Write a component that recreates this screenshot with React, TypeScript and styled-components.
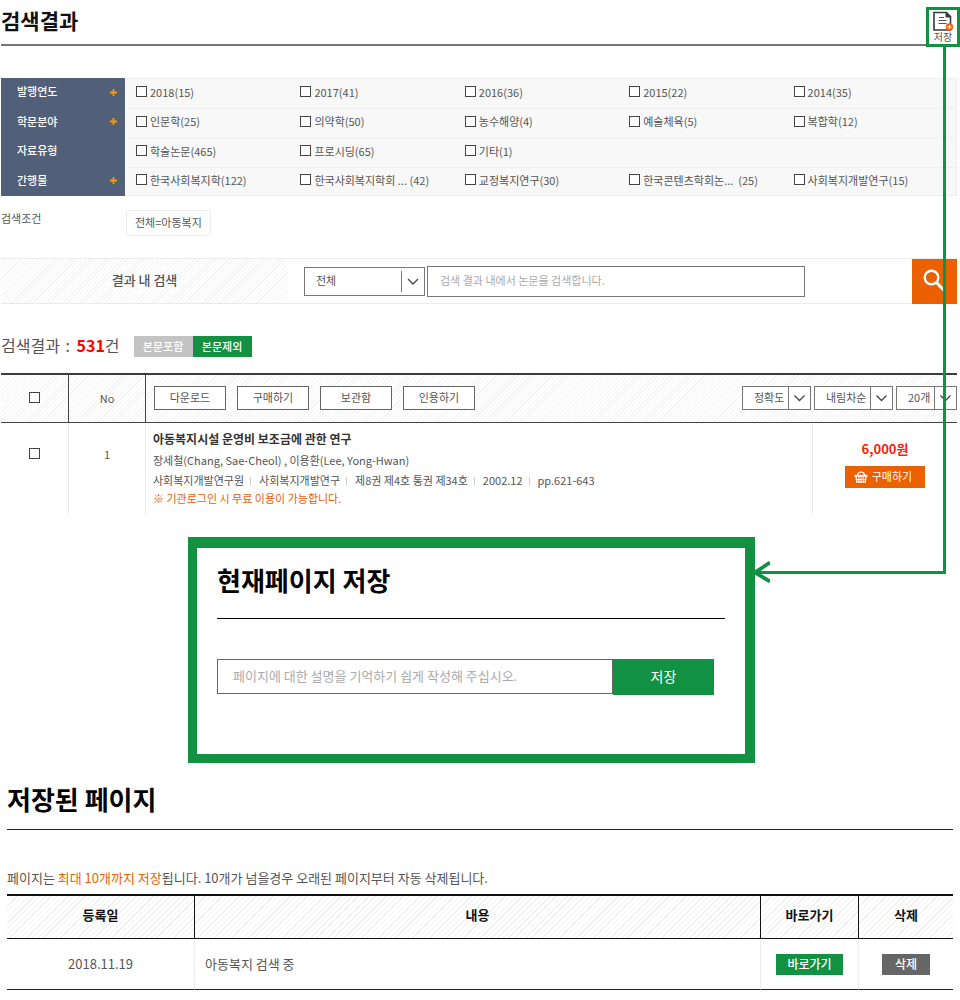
import React from "react";
import styled, { createGlobalStyle } from "styled-components";

const GREEN = "#129143";
const ORANGE = "#eb6100";

const GlobalStyle = createGlobalStyle`
  *, *::before, *::after { box-sizing: border-box; }
  body {
    margin: 0;
    background: #fff;
    color: #555;
    font: 400 11px/16px "Noto Sans CJK KR", "Noto Sans", sans-serif;
  }
  button, input, select { font: inherit; color: inherit; margin: 0; border-radius: 0; }
  button { cursor: pointer; padding: 0; border: 0; }
  h1, h2, p { margin: 0; }
  fieldset { margin: 0; padding: 0; border: 0; min-width: 0; }
`;

/* ---------- search results ---------- */

const SearchScreen = styled.main`
  position: relative;
`;

const Header = styled.header`
  margin: 0 3px 0 1px;
  height: 46px;
  border-bottom: 2px solid #777;
`;

const PageTitle = styled.h1`
  font-size: 21px;
  line-height: 40px;
  font-weight: 700;
  color: #111;
`;

const SavePageButton = styled.button`
  position: absolute;
  top: 7px;
  right: 0;
  width: 34px;
  height: 40px;
  border: 3px solid ${GREEN};
  background: #fff;
  display: flex;
  flex-direction: column;
  align-items: center;
  padding-top: 1px;
  font-size: 10px;
  line-height: 10px;
`;

const Content = styled.div`
  padding: 32px 3px 0 1px;
`;

const Filters = styled.div`
  display: grid;
  grid-auto-rows: 1fr;
  min-height: 118px;
`;

const FilterRow = styled.fieldset`
  display: grid;
  grid-template-columns: 124px 1fr;
`;

const FilterName = styled.div`
  display: flex;
  align-items: center;
  justify-content: space-between;
  padding: 0 8px 3px 16px;
  background: #515f79;
  color: #fff;
  font-weight: 500;
`;

const MoreButton = styled.button`
  background: none;
  width: 7px;
  height: 7px;
  display: flex;
  margin-top: 2px;
`;

const FilterOptions = styled.div`
  display: grid;
  grid-template-columns: repeat(5, 1fr);
  column-gap: 2px;
  align-items: center;
  margin-left: 1px;
  padding: 0 0 3px 10px;
  background: #f8f8f8;
  border: 1px solid #efefef;
  border-width: 1px 1px 0 0;
  ${FilterRow}:last-child & { border-bottom-width: 1px; }
`;

const Option = styled.label`
  display: flex;
  align-items: center;
  gap: 3px;
  white-space: pre;
`;

const CheckBox = styled.input.attrs({ type: "checkbox" })`
  appearance: none;
  flex: none;
  width: 11px;
  height: 11px;
  border: 1px solid #444;
  background: #fff;
  &:checked { background: #444; }
`;

const Condition = styled.div`
  display: grid;
  grid-template-columns: 125px auto;
  justify-content: start;
  align-items: start;
  margin-top: 14px;
`;

const ConditionTag = styled.span`
  border: 1px solid #ececec;
  border-radius: 3px;
  padding: 2px 8px 4px;
  line-height: 18px;
`;

const SearchBand = styled.form`
  display: flex;
  align-items: center;
  height: 46px;
  margin-top: 22px;
  border: solid #ebebeb;
  border-width: 1px 0;
`;

const BandLabel = styled.label`
  align-self: stretch;
  flex: 0 0 287px;
  display: flex;
  align-items: center;
  justify-content: center;
  margin-right: 16px;
  padding-bottom: 2px;
  font-size: 13px;
  font-weight: 500;
  background: repeating-linear-gradient(135deg, #fff 0 2px, #f4f4f4 2px 3px);
`;

const SelectBox = styled.span<{ $width: number; $height: number; $arrow: number }>`
  position: relative;
  display: inline-flex;
  flex: none;
  width: ${(p) => p.$width}px;
  height: ${(p) => p.$height}px;
  svg {
    position: absolute;
    right: 1px;
    top: 1px;
    width: ${(p) => p.$arrow}px;
    height: calc(100% - 2px);
    pointer-events: none;
  }
`;

const Select = styled.select`
  appearance: none;
  width: 100%;
  height: 100%;
  border: 1px solid #777;
  background: #fff;
  padding: 0 0 2px 11px;
`;

const BandInput = styled.input`
  flex: 0 1 378px;
  min-width: 0;
  height: 31px;
  margin-left: 2px;
  padding: 0 12px 2px;
  border: 1px solid #777;
  &::placeholder { color: #aaa; }
`;

const SearchButton = styled.button`
  flex: none;
  width: 45px;
  height: 45px;
  margin-left: auto;
  background: ${ORANGE};
`;

const ResultHead = styled.div`
  display: flex;
  align-items: center;
  gap: 14px;
  margin-top: 29px;
`;

const ResultCount = styled.h2`
  font-size: 16px;
  line-height: 24px;
  font-weight: 400;
  strong { color: #f00; }
`;

const Colon = styled.span`
  margin: 0 3px 0 2px;
`;

const Toggle = styled.div`
  display: flex;
  margin-top: 3px;
`;

const ToggleButton = styled.button<{ $active?: boolean }>`
  width: 59px;
  height: 21px;
  padding-bottom: 2px;
  color: #fff;
  font-weight: 500;
  background: ${(p) => (p.$active ? GREEN : "#c3c3c3")};
`;

const ResultTable = styled.table`
  width: 100%;
  margin-top: 16px;
  table-layout: fixed;
  border-collapse: separate;
  border-spacing: 0;
  border-top: 2px solid #3c3c3c;
`;

const ResultTh = styled.th`
  height: 48px;
  padding: 0 0 1px;
  font-weight: 400;
  border-bottom: 1px solid #444;
  background: repeating-linear-gradient(135deg, #fff 0 2px, #f4f4f4 2px 3px);
  & + & { border-left: 1px solid #444; }
`;

const ResultTd = styled.td`
  height: 92px;
  padding: 0;
  vertical-align: top;
  text-align: center;
  & + & { border-left: 1px solid #ececec; }
`;

const CellTop = styled.div`
  display: flex;
  align-items: center;
  justify-content: center;
  height: 61px;
`;

const Toolbar = styled.div`
  display: flex;
  align-items: center;
  gap: 11px;
  padding-left: 8px;
`;

const ToolButton = styled.button`
  width: 72px;
  height: 24px;
  padding-bottom: 2px;
  border: 1px solid #666;
  background: #fff;
`;

const SortGroup = styled.div`
  display: flex;
  gap: 3px;
  margin-left: auto;
`;

const Article = styled.div`
  padding: 6px 0 0 7px;
  text-align: left;
`;

const ArticleTitle = styled.a`
  display: block;
  font-size: 12px;
  line-height: 20px;
  font-weight: 700;
  color: #333;
  text-decoration: none;
`;

const Authors = styled.p`
  line-height: 22px;
`;

const Meta = styled.p`
  display: flex;
  line-height: 18px;
`;

const MetaPart = styled.span`
  & + &::before {
    content: "";
    display: inline-block;
    height: 8px;
    margin: 0 8px 0 6px;
    border-left: 1px solid #ccc;
  }
`;

const Notice = styled.p`
  line-height: 18px;
  color: ${ORANGE};
`;

const Price = styled.p`
  padding-top: 17px;
  font-size: 13px;
  line-height: 18px;
  font-weight: 700;
  color: #fa1e0e;
`;

const BuyButton = styled.button`
  display: inline-flex;
  align-items: center;
  justify-content: center;
  gap: 4px;
  width: 80px;
  height: 22px;
  margin-top: 8px;
  padding: 0 4px 2px 0;
  color: #fff;
  background: ${ORANGE};
  svg { margin-top: 2px; }
`;

/* ---------- save dialog with its pointer ---------- */

const DialogRow = styled.div`
  display: flex;
  margin: 22px 14px 0 188px;
`;

const Dialog = styled.section`
  flex: 0 1 567px;
  min-height: 226px;
  border: solid ${GREEN};
  border-width: 11px 10px 9px 9px;
  padding: 12px 20px 0;
`;

const DialogTitle = styled.h2`
  padding-bottom: 18px;
  border-bottom: 1px solid #000;
  font-size: 26px;
  line-height: 40px;
  color: #000;
`;

const SaveForm = styled.form`
  display: flex;
  margin: 40px 11px 0 0;
  font-size: 14px;
`;

const SaveInput = styled.input`
  flex: 1;
  min-width: 0;
  height: 35px;
  padding: 0 15px 2px;
  border: 1px solid #666;
  font-size: 13px;
  &::placeholder { color: #aaa; }
`;

const SaveButton = styled.button`
  width: 101px;
  height: 36px;
  padding-bottom: 2px;
  background: ${GREEN};
  color: #fff;
`;

const Pointer = styled.div`
  flex: 1;
  display: flex;
  height: 22px;
  margin-top: 24px;
  svg { flex: none; }
`;

const PointerLine = styled.span`
  flex: 1;
  height: 3px;
  margin: 10px 0 0 -12px;
  background: ${GREEN};
`;

const PointerStem = styled.span`
  position: absolute;
  top: 47px;
  right: 14px;
  bottom: 189px;
  width: 3px;
  background: ${GREEN};
`;

/* ---------- saved pages ---------- */

const Saved = styled.section`
  padding: 0 7px 10px;
  font-size: 13px;
`;

const SavedTitle = styled.h2`
  padding: 16px 0 10px;
  border-bottom: 1px solid #222;
  font-size: 26px;
  line-height: 40px;
  color: #000;
`;

const SavedNote = styled.p`
  margin-top: 38px;
  line-height: 20px;
  em { font-style: normal; color: ${ORANGE}; }
`;

const SavedTable = styled.table`
  width: 100%;
  margin-top: 6px;
  table-layout: fixed;
  border-collapse: separate;
  border-spacing: 0;
  border-top: 2px solid #111;
`;

const SavedTh = styled.th`
  height: 43px;
  padding: 0 0 4px;
  color: #111;
  font-weight: 700;
  border-bottom: 1px solid #111;
  background: repeating-linear-gradient(135deg, #fff 0 3px, #f0f0f0 3px 4px);
  & + & { border-left: 1px solid #111; }
`;

const SavedTd = styled.td<{ $left?: boolean }>`
  height: 51px;
  padding: 0 ${(p) => (p.$left ? 10 : 0)}px;
  text-align: ${(p) => (p.$left ? "left" : "center")};
  border-bottom: 1px solid #222;
  & + & { border-left: 1px solid #ececec; }
`;

const RowButton = styled.button<{ $dark?: boolean }>`
  width: ${(p) => (p.$dark ? 48 : 67)}px;
  height: 21px;
  padding-bottom: 1px;
  font-size: 12px;
  font-weight: 500;
  color: #fff;
  background: ${(p) => (p.$dark ? "#666" : GREEN)};
`;

const filters = [
  { name: "발행연도", more: true, options: ["2018(15)", "2017(41)", "2016(36)", "2015(22)", "2014(35)"] },
  { name: "학문분야", more: true, options: ["인문학(25)", "의약학(50)", "농수해양(4)", "예술체육(5)", "복합학(12)"] },
  { name: "자료유형", more: false, options: ["학술논문(465)", "프로시딩(65)", "기타(1)"] },
  {
    name: "간행물",
    more: true,
    options: ["한국사회복지학(122)", "한국사회복지학회 ... (42)", "교정복지연구(30)", "한국콘텐츠학회논...  (25)", "사회복지개발연구(15)"],
  },
];

function DropDown(props: { label: string; value: string; width: number; height: number; arrow: number }) {
  const { label, value, width, height, arrow } = props;
  const mid = arrow / 2;
  return (
    <SelectBox $width={width} $height={height} $arrow={arrow}>
      <Select aria-label={label}>
        <option>{value}</option>
      </Select>
      <svg viewBox={`0 0 ${arrow} ${height - 2}`} aria-hidden="true">
        <path d={`M.5 ${height > 26 ? 3 : 0}V${height > 26 ? height - 5 : height}`} stroke="#777" />
        <path
          d={`M${mid - 4.5} ${height / 2 - 3.5}l5 5 5-5`}
          fill="none"
          stroke="#444"
          strokeWidth="1.300"
        />
      </svg>
    </SelectBox>
  );
}

function DocumentIcon() {
  return (
    <svg width="22" height="21" viewBox="0 0 22 21" aria-hidden="true">
      <path d="M2 1.500h12.500l4 4V19H2z" fill="#fff" stroke="#3a3a3a" strokeWidth="1.600" />
      <path d="M14 1.500v4.500h4.500z" fill="#3a3a3a" stroke="#3a3a3a" />
      <path d="M7 6.500h5M6.500 9.500h8M6.500 12.500h8" stroke="#555" strokeWidth="1.200" />
      <circle cx="17.500" cy="16" r="3.700" fill="#f06414" />
      <path d="M15.500 16h4M17.500 14v4" stroke="#fff" />
    </svg>
  );
}

function BasketIcon() {
  return (
    <svg width="14" height="12" viewBox="0 0 14 12" fill="none" stroke="#fff" aria-hidden="true">
      <path d="M3.500 4.500C3.500 0 10.500 0 10.500 4.500" strokeWidth="1.300" />
      <path d="M.5 4.800h13" strokeWidth="2" />
      <path d="M2 5.500l.8 5.700h8.400l.8-5.700" strokeWidth="1.300" />
      <path d="M4.800 6v5M7 6v5M9.200 6v5M2.500 8.500h9" />
    </svg>
  );
}

export default function App() {
  return (
    <>
      <GlobalStyle />
      <SearchScreen>
        <Header>
          <PageTitle>검색결과</PageTitle>
        </Header>
        <SavePageButton type="button">
          <DocumentIcon />
          저장
        </SavePageButton>

        <Content>
          <Filters>
            {filters.map((f) => (
              <FilterRow key={f.name} aria-label={f.name}>
                <FilterName>
                  {f.name}
                  {f.more && (
                    <MoreButton type="button" aria-label={`${f.name} 더보기`}>
                      <svg width="7" height="7" viewBox="0 0 7 7">
                        <path d="M0 3.500h7M3.500 0v7" stroke="#f39a12" strokeWidth="1.800" />
                      </svg>
                    </MoreButton>
                  )}
                </FilterName>
                <FilterOptions>
                  {f.options.map((o) => (
                    <Option key={o}>
                      <CheckBox />
                      {o}
                    </Option>
                  ))}
                </FilterOptions>
              </FilterRow>
            ))}
          </Filters>

          <Condition>
            <span>검색조건</span>
            <ConditionTag>전체=아동복지</ConditionTag>
          </Condition>

          <SearchBand onSubmit={(e) => e.preventDefault()}>
            <BandLabel htmlFor="within">결과 내 검색</BandLabel>
            <DropDown label="검색 범위" value="전체" width={121} height={29} arrow={23} />
            <BandInput id="within" placeholder="검색 결과 내에서 논문을 검색합니다." />
            <SearchButton type="submit" aria-label="검색">
              <svg width="45" height="45" viewBox="0 0 45 45" fill="none" stroke="#fff">
                <circle cx="19.500" cy="18.500" r="6.800" strokeWidth="2.400" />
                <path d="M24.500 23.500l8 8.500" strokeWidth="3" />
              </svg>
            </SearchButton>
          </SearchBand>

          <ResultHead>
            <ResultCount>
              검색결과 <Colon>:</Colon> <strong>531</strong>건
            </ResultCount>
            <Toggle>
              <ToggleButton type="button">본문포함</ToggleButton>
              <ToggleButton type="button" $active>본문제외</ToggleButton>
            </Toggle>
          </ResultHead>

          <ResultTable>
            <colgroup>
              <col width="67" />
              <col width="77" />
              <col />
              <col width="145" />
            </colgroup>
            <thead>
              <tr>
                <ResultTh>
                  <CheckBox aria-label="전체 선택" />
                </ResultTh>
                <ResultTh>No</ResultTh>
                <ResultTh colSpan={2}>
                  <Toolbar>
                    {["다운로드", "구매하기", "보관함", "인용하기"].map((t) => (
                      <ToolButton key={t} type="button">{t}</ToolButton>
                    ))}
                    <SortGroup>
                      <DropDown label="정렬 기준" value="정확도" width={69} height={24} arrow={22} />
                      <DropDown label="정렬 순서" value="내림차순" width={79} height={24} arrow={22} />
                      <DropDown label="표시 개수" value="20개" width={61} height={24} arrow={22} />
                    </SortGroup>
                  </Toolbar>
                </ResultTh>
              </tr>
            </thead>
            <tbody>
              <tr>
                <ResultTd>
                  <CellTop>
                    <CheckBox aria-label="1번 논문 선택" />
                  </CellTop>
                </ResultTd>
                <ResultTd>
                  <CellTop>1</CellTop>
                </ResultTd>
                <ResultTd>
                  <Article>
                    <ArticleTitle href="#article">아동복지시설 운영비 보조금에 관한 연구</ArticleTitle>
                    <Authors>장세철(Chang, Sae-Cheol) , 이용환(Lee, Yong-Hwan)</Authors>
                    <Meta>
                      <MetaPart>사회복지개발연구원</MetaPart>
                      <MetaPart>사회복지개발연구</MetaPart>
                      <MetaPart>제8권 제4호 통권 제34호</MetaPart>
                      <MetaPart>2002.12</MetaPart>
                      <MetaPart>pp.621-643</MetaPart>
                    </Meta>
                    <Notice>※ 기관로그인 시 무료 이용이 가능합니다.</Notice>
                  </Article>
                </ResultTd>
                <ResultTd>
                  <Price>6,000원</Price>
                  <BuyButton type="button">
                    <BasketIcon />
                    구매하기
                  </BuyButton>
                </ResultTd>
              </tr>
            </tbody>
          </ResultTable>
        </Content>

        <DialogRow>
          <Dialog aria-labelledby="save-title">
            <DialogTitle id="save-title">현재페이지 저장</DialogTitle>
            <SaveForm onSubmit={(e) => e.preventDefault()}>
              <SaveInput
                aria-label="페이지 설명"
                placeholder="페이지에 대한 설명을 기억하기 쉽게 작성해 주십시오."
              />
              <SaveButton type="submit">저장</SaveButton>
            </SaveForm>
          </Dialog>
          <Pointer aria-hidden="true">
            <svg width="15" height="22" viewBox="0 0 15 22">
              <path d="M15 1.500L0 11.500l15 9" fill="none" stroke={GREEN} strokeWidth="3.800" />
            </svg>
            <PointerLine />
          </Pointer>
        </DialogRow>
        <PointerStem />
      </SearchScreen>

      <Saved>
        <SavedTitle>저장된 페이지</SavedTitle>
        <SavedNote>
          페이지는 <em>최대 10개까지 저장</em>됩니다. 10개가 넘을경우 오래된 페이지부터 자동 삭제됩니다.
        </SavedNote>
        <SavedTable>
          <colgroup>
            <col width="187" />
            <col />
            <col width="98" />
            <col width="95" />
          </colgroup>
          <thead>
            <tr>
              <SavedTh>등록일</SavedTh>
              <SavedTh>내용</SavedTh>
              <SavedTh>바로가기</SavedTh>
              <SavedTh>삭제</SavedTh>
            </tr>
          </thead>
          <tbody>
            <tr>
              <SavedTd>2018.11.19</SavedTd>
              <SavedTd $left>아동복지 검색 중</SavedTd>
              <SavedTd>
                <RowButton type="button">바로가기</RowButton>
              </SavedTd>
              <SavedTd>
                <RowButton type="button" $dark>삭제</RowButton>
              </SavedTd>
            </tr>
          </tbody>
        </SavedTable>
      </Saved>
    </>
  );
}
